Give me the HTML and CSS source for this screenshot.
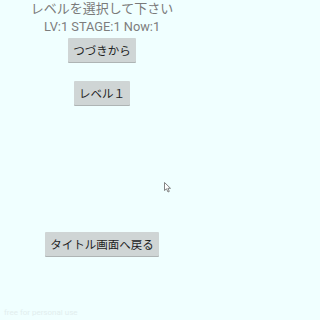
FILE: index.html
```html
<!DOCTYPE html>
<html lang="ja">
<head>
<meta charset="utf-8">
<link rel="stylesheet" href="styles.css">
</head>
<body>
<div class="screen">
  <div class="title">レベルを選択して下さい</div>
  <div class="status">LV:1 STAGE:1 Now:1</div>
  <button class="btn btn-continue">つづきから</button>
  <button class="btn btn-level">レベル１</button>
  <button class="btn btn-back">タイトル画面へ戻る</button>
  <div class="footer">free for personal use</div>
  <svg class="cursor" width="8" height="11" viewBox="0 0 8 11">
    <path d="M0.5 0.5 L0.5 8.5 L2.5 6.8 L4 10 L5.3 9.4 L3.9 6.3 L6.5 6.3 Z" fill="#fff" stroke="#666" stroke-width="0.8"/>
  </svg>
</div>
</body>
</html>
```
FILE: styles.css
```css
html, body {
  margin: 0;
  padding: 0;
}
body {
  background: #f0ffff;
  font-family: Roboto, "Noto Sans CJK JP", sans-serif;
}
.screen {
  position: relative;
  width: 204px;
  height: 320px;
  display: flex;
  flex-direction: column;
  align-items: center;
}
.title {
  margin-top: 1px;
  font-size: 13px;
  line-height: 16px;
  color: #7a7a7a;
}
.status {
  margin-top: 2px;
  font-size: 12.8px;
  line-height: 16px;
  color: #7d7d7d;
}
.btn {
  font-family: Roboto, "Noto Sans CJK JP", sans-serif;
  font-size: 11.5px;
  color: #1e1e1e;
  background: #cfd5d5;
  border: none;
  border-radius: 1px;
  box-shadow: 0 1px 0 #aeb4b4;
  height: 24px;
  padding: 0 5px;
  margin: 0;
}
.btn-continue {
  margin-top: 3px;
}
.btn-level {
  margin-top: 19px;
}
.btn-back {
  margin-top: 127px;
}
.footer {
  margin-top: auto;
  align-self: flex-start;
  margin-left: 4px;
  margin-bottom: 2px;
  font-size: 8px;
  line-height: 10px;
  color: #e2eeee;
}
.cursor {
  position: absolute;
  left: 164px;
  top: 182px;
}
```
